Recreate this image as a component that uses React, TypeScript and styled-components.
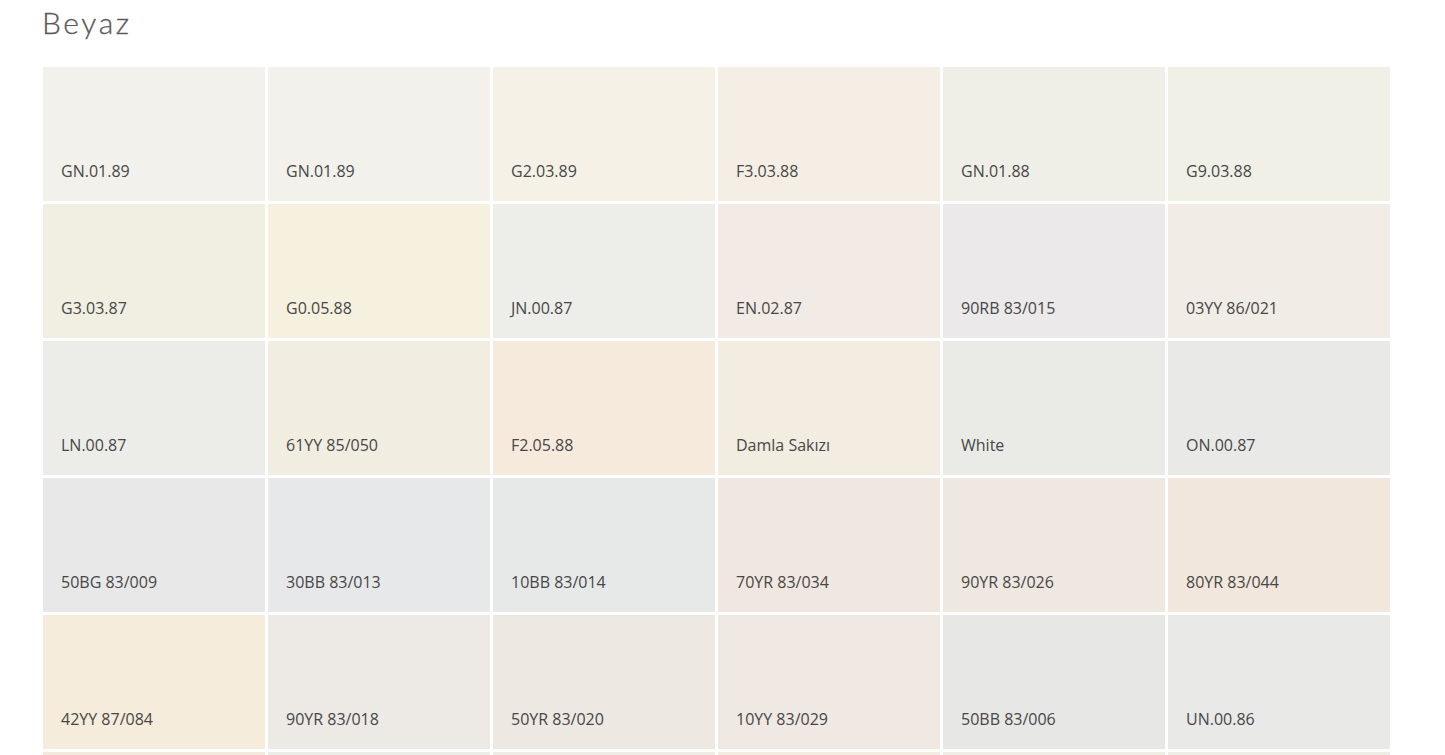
import React from 'react'
import styled, { createGlobalStyle } from 'styled-components'

const GlobalStyle = createGlobalStyle`
	html, body {
		margin: 0;
		padding: 0;
		background: #ffffff;
		overflow: hidden;
	}
	body {
		font-family: 'Open Sans', 'Liberation Sans', sans-serif;
	}
`

const Page = styled.div`
	padding: 4px 0 0 43px;
`

const Title = styled.h2`
	margin: 0 0 0 -1px;
	height: 63px;
	font-family: Lato, 'Open Sans', sans-serif;
	font-weight: 300;
	font-size: 30px;
	line-height: 36px;
	letter-spacing: 2.6px;
	color: #5a5a5a;
	-webkit-text-stroke: 0.3px #5a5a5a;
`

const Swatches = styled.div`
	display: grid;
	grid-template-columns: repeat(6, 222px);
	grid-auto-rows: 134px;
	gap: 3px;
`

const Swatch = styled.div<{ $color: string }>`
	display: flex;
	flex-direction: column;
	justify-content: flex-end;
	padding: 0 0 19px 18px;
	background: ${(p) => p.$color};
`

const Code = styled.span`
	font-size: 16px;
	line-height: 22px;
	color: #474747;
`

type Paint = { code: string; color: string }

const paints: Paint[] = [
	{ code: 'GN.01.89', color: '#f2f1ec' },
	{ code: 'GN.01.89', color: '#f2f1ec' },
	{ code: 'G2.03.89', color: '#f5f1e6' },
	{ code: 'F3.03.88', color: '#f5eee5' },
	{ code: 'GN.01.88', color: '#efefe8' },
	{ code: 'G9.03.88', color: '#f0f0e6' },

	{ code: 'G3.03.87', color: '#f1efe2' },
	{ code: 'G0.05.88', color: '#f6f0df' },
	{ code: 'JN.00.87', color: '#edeee9' },
	{ code: 'EN.02.87', color: '#f2eae5' },
	{ code: '90RB 83/015', color: '#ebe9ea' },
	{ code: '03YY 86/021', color: '#f1ece5' },

	{ code: 'LN.00.87', color: '#ecede8' },
	{ code: '61YY 85/050', color: '#f2ede1' },
	{ code: 'F2.05.88', color: '#f6eadc' },
	{ code: 'Damla Sakızı', color: '#f3ece0' },
	{ code: 'White', color: '#eaebe6' },
	{ code: 'ON.00.87', color: '#e9e9e7' },

	{ code: '50BG 83/009', color: '#e7e8e7' },
	{ code: '30BB 83/013', color: '#e7e8e9' },
	{ code: '10BB 83/014', color: '#e6e9e8' },
	{ code: '70YR 83/034', color: '#f0e7e1' },
	{ code: '90YR 83/026', color: '#eee8e1' },
	{ code: '80YR 83/044', color: '#f2e7dc' },

	{ code: '42YY 87/084', color: '#f5ecdb' },
	{ code: '90YR 83/018', color: '#ede9e4' },
	{ code: '50YR 83/020', color: '#eee8e3' },
	{ code: '10YY 83/029', color: '#f0e8e2' },
	{ code: '50BB 83/006', color: '#e7e8e6' },
	{ code: 'UN.00.86', color: '#e9e9e7' },

	{ code: '28YR 86/045', color: '#f3e9dd' },
	{ code: '10BG 86/014', color: '#ecece8' },
	{ code: '30YY 86/038', color: '#efebe5' },
	{ code: '50YY 86/034', color: '#f2ece1' },
	{ code: '45YY 86/029', color: '#efede4' },
	{ code: '64YY 86/026', color: '#eeede6' },
]

export default function App() {
	return (
		<>
			<GlobalStyle />
			<Page>
				<Title>Beyaz</Title>
				<Swatches>
					{paints.map((p, i) => (
						<Swatch key={i} $color={p.color}>
							<Code>{p.code}</Code>
						</Swatch>
					))}
				</Swatches>
			</Page>
		</>
	)
}
